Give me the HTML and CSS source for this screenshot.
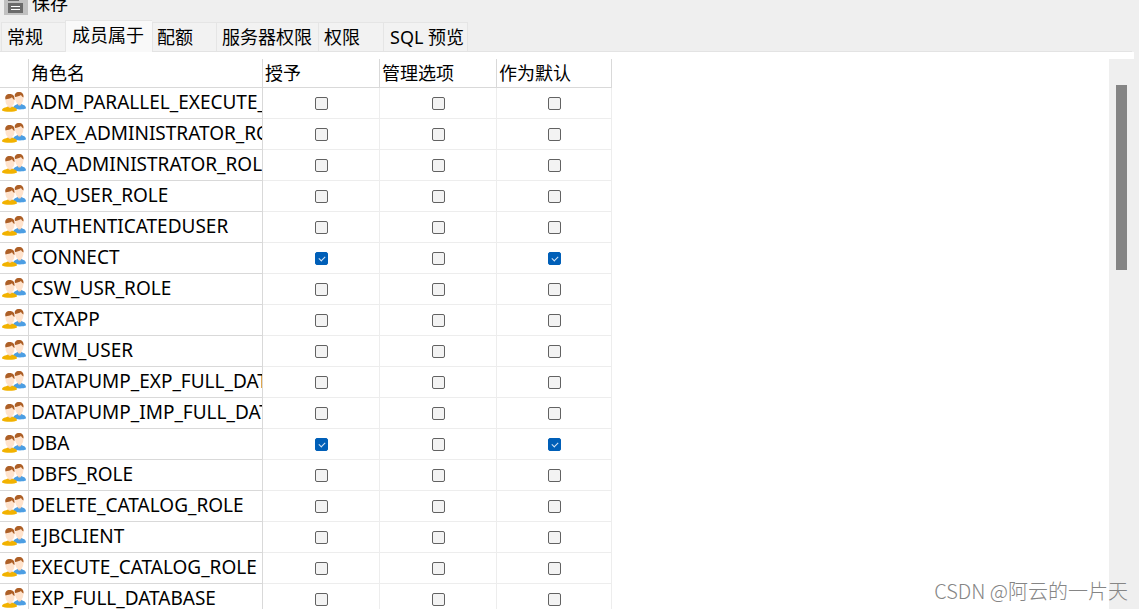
FILE: index.html
```html
<!DOCTYPE html>
<html lang="zh-CN">
<head>
<meta charset="utf-8">
<title>成员属于</title>
<link rel="stylesheet" href="styles.css">
</head>
<body>
<svg class="defs" aria-hidden="true">
  <symbol id="users" viewBox="0 0 24 21">
    <path d="M11 16C12 13 14 13 15.500 12H19.500C21 13 24 13 24 16.500C22 17.500 14 18 11 16Z" fill="#4c9ee3"/>
    <path d="M15.500 10H19.500V12C18.500 14 16.500 14 15.500 12Z" fill="#fbd3b6"/>
    <ellipse cx="17.300" cy="6.500" rx="4.100" ry="5.500" fill="#ffe3cd"/>
    <path d="M13 5C12 2 14 0 17 0C20 0 22 2 21.500 5.500C20.500 5 19.500 4 19 3C17.500 4.300 15 4.500 13 5Z" fill="#ad5f26"/>
    <path d="M0 18.500C0 15.500 4 15.500 6 14.500H10C12 15.500 15 15.500 15 18.500C13 20.300 2 20.300 0 18.500Z" fill="#f2b200"/>
    <path d="M6 12.500H10V14.500C9 16.300 7 16.300 6 14.500Z" fill="#fbd3b6"/>
    <ellipse cx="8" cy="9" rx="4.500" ry="5.700" fill="#ffe3cd"/>
    <path d="M3.500 7.500C2.500 4 4.500 2 7.800 2C11 2 13 4 12.500 8C11.300 7.300 10.500 6.500 10 5.300C8.300 6.800 5.500 7 3.500 7.500Z" fill="#ad5f26"/>
  </symbol>
</svg>
<header class="toolbar">
  <button class="save" type="button">
    <svg class="save-icon" viewBox="0 0 24 24" aria-hidden="true">
      <rect width="24" height="24" fill="#c1c1c1"/>
      <path d="M4 5H15V10H4Z" fill="#6b6b6b"/>
      <rect x="4" y="12" width="15" height="10" fill="#6b6b6b"/>
      <path d="M7 15.500H16M7 18.500H16" stroke="#fff" stroke-width="1"/>
    </svg>
    <span>保存</span>
  </button>
</header>
<nav class="tabs" role="tablist">
  <button class="tab" type="button" role="tab">常规</button>
  <button class="tab active" type="button" role="tab" aria-selected="true">成员属于</button>
  <button class="tab tight" type="button" role="tab">配额</button>
  <button class="tab wide" type="button" role="tab">服务器权限</button>
  <button class="tab" type="button" role="tab">权限</button>
  <button class="tab last" type="button" role="tab">SQL 预览</button>
</nav>
<div class="strip"></div>
<main class="panel">
  <table class="roles">
    <colgroup><col class="c-icon"><col class="c-name"><col class="c-opt"><col class="c-opt"><col class="c-end"></colgroup>
    <thead><tr><th></th><th>角色名</th><th>授予</th><th>管理选项</th><th>作为默认</th></tr></thead>
    <tbody>
      <tr><td><svg class="users"><use href="#users"/></svg></td><td>ADM_PARALLEL_EXECUTE_TASK</td><td><input type="checkbox" aria-label="授予"></td><td><input type="checkbox" aria-label="管理选项"></td><td><input type="checkbox" aria-label="作为默认"></td></tr>
      <tr><td><svg class="users"><use href="#users"/></svg></td><td>APEX_ADMINISTRATOR_ROLE</td><td><input type="checkbox" aria-label="授予"></td><td><input type="checkbox" aria-label="管理选项"></td><td><input type="checkbox" aria-label="作为默认"></td></tr>
      <tr><td><svg class="users"><use href="#users"/></svg></td><td>AQ_ADMINISTRATOR_ROLE</td><td><input type="checkbox" aria-label="授予"></td><td><input type="checkbox" aria-label="管理选项"></td><td><input type="checkbox" aria-label="作为默认"></td></tr>
      <tr><td><svg class="users"><use href="#users"/></svg></td><td>AQ_USER_ROLE</td><td><input type="checkbox" aria-label="授予"></td><td><input type="checkbox" aria-label="管理选项"></td><td><input type="checkbox" aria-label="作为默认"></td></tr>
      <tr><td><svg class="users"><use href="#users"/></svg></td><td>AUTHENTICATEDUSER</td><td><input type="checkbox" aria-label="授予"></td><td><input type="checkbox" aria-label="管理选项"></td><td><input type="checkbox" aria-label="作为默认"></td></tr>
      <tr><td><svg class="users"><use href="#users"/></svg></td><td>CONNECT</td><td><input type="checkbox" aria-label="授予" checked></td><td><input type="checkbox" aria-label="管理选项"></td><td><input type="checkbox" aria-label="作为默认" checked></td></tr>
      <tr><td><svg class="users"><use href="#users"/></svg></td><td>CSW_USR_ROLE</td><td><input type="checkbox" aria-label="授予"></td><td><input type="checkbox" aria-label="管理选项"></td><td><input type="checkbox" aria-label="作为默认"></td></tr>
      <tr><td><svg class="users"><use href="#users"/></svg></td><td>CTXAPP</td><td><input type="checkbox" aria-label="授予"></td><td><input type="checkbox" aria-label="管理选项"></td><td><input type="checkbox" aria-label="作为默认"></td></tr>
      <tr><td><svg class="users"><use href="#users"/></svg></td><td>CWM_USER</td><td><input type="checkbox" aria-label="授予"></td><td><input type="checkbox" aria-label="管理选项"></td><td><input type="checkbox" aria-label="作为默认"></td></tr>
      <tr><td><svg class="users"><use href="#users"/></svg></td><td>DATAPUMP_EXP_FULL_DATABASE</td><td><input type="checkbox" aria-label="授予"></td><td><input type="checkbox" aria-label="管理选项"></td><td><input type="checkbox" aria-label="作为默认"></td></tr>
      <tr><td><svg class="users"><use href="#users"/></svg></td><td>DATAPUMP_IMP_FULL_DATABASE</td><td><input type="checkbox" aria-label="授予"></td><td><input type="checkbox" aria-label="管理选项"></td><td><input type="checkbox" aria-label="作为默认"></td></tr>
      <tr><td><svg class="users"><use href="#users"/></svg></td><td>DBA</td><td><input type="checkbox" aria-label="授予" checked></td><td><input type="checkbox" aria-label="管理选项"></td><td><input type="checkbox" aria-label="作为默认" checked></td></tr>
      <tr><td><svg class="users"><use href="#users"/></svg></td><td>DBFS_ROLE</td><td><input type="checkbox" aria-label="授予"></td><td><input type="checkbox" aria-label="管理选项"></td><td><input type="checkbox" aria-label="作为默认"></td></tr>
      <tr><td><svg class="users"><use href="#users"/></svg></td><td>DELETE_CATALOG_ROLE</td><td><input type="checkbox" aria-label="授予"></td><td><input type="checkbox" aria-label="管理选项"></td><td><input type="checkbox" aria-label="作为默认"></td></tr>
      <tr><td><svg class="users"><use href="#users"/></svg></td><td>EJBCLIENT</td><td><input type="checkbox" aria-label="授予"></td><td><input type="checkbox" aria-label="管理选项"></td><td><input type="checkbox" aria-label="作为默认"></td></tr>
      <tr><td><svg class="users"><use href="#users"/></svg></td><td>EXECUTE_CATALOG_ROLE</td><td><input type="checkbox" aria-label="授予"></td><td><input type="checkbox" aria-label="管理选项"></td><td><input type="checkbox" aria-label="作为默认"></td></tr>
      <tr><td><svg class="users"><use href="#users"/></svg></td><td>EXP_FULL_DATABASE</td><td><input type="checkbox" aria-label="授予"></td><td><input type="checkbox" aria-label="管理选项"></td><td><input type="checkbox" aria-label="作为默认"></td></tr>
    </tbody>
  </table>
  <div class="track"><div class="thumb"></div></div>
</main>
<div class="watermark">CSDN @阿云的一片天</div>
</body>
</html>
```
FILE: styles.css
```css
* {
  box-sizing: border-box;
}

body {
  display: flex;
  flex-direction: column;
  height: 100vh;
  margin: 0;
  overflow: hidden;
  border-right: 4px solid #fff;
  color: #000;
  font: 18px/24px "Noto Sans", "Noto Sans CJK SC", sans-serif;
}

html {
  background: #fff;
}

body {
  background: #efefef;
}

button {
  border: 0;
  padding: 0;
  background: none;
  color: inherit;
  font: inherit;
}

.defs {
  position: absolute;
  width: 0;
  height: 0;
}

.toolbar {
  display: flex;
  flex: none;
  align-items: flex-end;
  height: 20px;
  padding: 0 4px 5px;
}

.save {
  display: flex;
  align-items: flex-end;
  gap: 4px;
}

.save-icon {
  display: block;
  width: 24px;
  height: 24px;
}

.tabs {
  display: flex;
  flex: none;
  align-items: flex-end;
  height: 32px;
  margin-right: 7px;
  padding-left: 1px;
  border-bottom: 1px solid #e3e3e3;
}

.tab {
  height: 29px;
  padding: 0 23px 0 5px;
  border: 1px solid #e5e5e5;
  border-width: 1px 0 0 1px;
  background: #f2f2f2;
  white-space: nowrap;
}

.tab:first-child {
  padding-right: 22px;
}

.tab.active {
  height: 32px;
  margin-bottom: -1px;
  padding: 0 8px 4px 6px;
  background: #f9f9f9;
}

.tab.tight {
  padding-left: 4px;
}

.tab.wide {
  padding-right: 6px;
}

.tab.last {
  padding-right: 3px;
  padding-left: 6px;
  border-right-width: 1px;
}

.strip {
  flex: none;
  height: 7px;
  margin-right: 5px;
  background: #fff;
}

.panel {
  display: flex;
  flex: 1;
  align-items: flex-start;
  justify-content: space-between;
  min-height: 0;
  background: #fff;
}

.roles {
  width: 612px;
  border-collapse: separate;
  border-spacing: 0;
  table-layout: fixed;
}

.c-icon {
  width: 29px;
}

.c-name {
  width: 234px;
}

.c-opt {
  width: 117px;
}

.c-end {
  width: 115px;
}

th,
td {
  height: 31px;
  padding: 0 0 2px 2px;
  overflow: hidden;
  border: 1px solid #ededed;
  border-width: 0 1px 1px 0;
  font-weight: 400;
  line-height: 24px;
  text-align: left;
  white-space: nowrap;
}

th {
  height: 29px;
  padding-bottom: 0;
  border-color: #d9d9d9;
}

td:nth-child(-n+2) {
  border-color: #d9d9d9;
}

td:nth-child(2) {
  font-size: 19px;
}

td:nth-child(n+3) {
  padding: 0;
  text-align: center;
}

.users {
  display: block;
  width: 24px;
  height: 21px;
}

input {
  display: block;
  width: 13px;
  height: 13px;
  margin: 1px auto 0;
  border: 1px solid #626262;
  border-radius: 2px;
  appearance: none;
  background: #f3f3f3;
}

input:checked {
  border-color: #005fb8;
  background: #005fb8;
}

input:checked::before {
  display: block;
  width: 5px;
  height: 3px;
  margin: 3px;
  border: 1px solid #d5e5f5;
  border-width: 0 0 1px 1px;
  content: "";
  transform: rotate(-45deg);
}

.track {
  align-self: stretch;
  width: 30px;
  padding: 26px 12px 0 7px;
  background: #efefef;
}

.thumb {
  height: 185px;
  background: #858585;
}

.watermark {
  position: absolute;
  right: 15px;
  bottom: 5px;
  color: #858585;
  font: 300 20px/26px "Noto Sans CJK SC", sans-serif;
}
```
